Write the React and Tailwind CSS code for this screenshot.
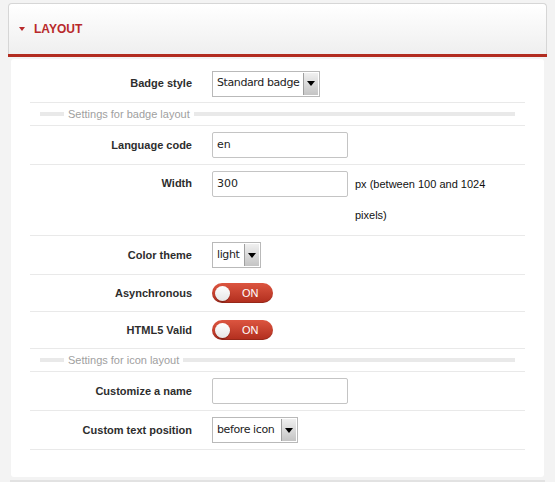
import React from "react";

const sans = { fontFamily: '"Liberation Sans", Arial, sans-serif' };

function Select({ value, width }) {
  return (
    <div
      className="flex h-[26px] items-stretch border border-[#b9b9b9] bg-white"
      style={{ width }}
    >
      <div className="flex flex-1 items-center overflow-hidden whitespace-nowrap pl-[4px] text-[11px] text-[#222] [font-family:'DejaVu_Sans',sans-serif] tracking-[-0.4px]">
        {value}
      </div>
      <div className="my-[1px] mr-[1px] flex w-[15px] items-center justify-center border-l border-[#a0a0a0] bg-gradient-to-b from-[#f0f0f0] to-[#c4c4c4]">
        <div className="h-0 w-0 border-l-[4px] border-r-[4px] border-t-[5px] border-l-transparent border-r-transparent border-t-black" />
      </div>
    </div>
  );
}

function Input({ value }) {
  return (
    <div className="flex h-[26px] w-[136px] items-center rounded-[2px] border border-[#c4c4c4] bg-white pl-[4px] text-[11px] text-[#222] [font-family:'DejaVu_Sans',sans-serif]">
      {value}
    </div>
  );
}

function Toggle() {
  return (
    <div className="flex h-[20px] w-[61px] items-center rounded-full bg-gradient-to-b from-[#dc5540] to-[#b12d1d] pl-[3px] shadow-[inset_0_-1px_0_rgba(0,0,0,0.15)]">
      <div className="h-[15px] w-[15px] rounded-full bg-gradient-to-b from-white to-[#e6e6e6] shadow-[0_1px_1px_rgba(0,0,0,0.3)]" />
      <span className="ml-[12px] text-[11px] text-white" style={sans}>
        ON
      </span>
    </div>
  );
}

function Row({ label, children, h = "h-[38px]" }) {
  return (
    <div className={`flex ${h} items-center border-b border-[#e9e9e9]`}>
      <div className="w-[162px] text-right text-[11px] font-bold text-[#2d2d2d]" style={sans}>
        {label}
      </div>
      <div className="ml-[20px] flex items-center">{children}</div>
    </div>
  );
}

function Section({ title }) {
  return (
    <div className="flex h-[23px] items-center border-b border-[#e9e9e9] pl-[10px] pr-[10px]">
      <div className="h-[4px] w-[24px] bg-[#e9e9e9]" />
      <span className="px-[4px] text-[11px] text-[#a0a0a0]" style={sans}>
        {title}
      </span>
      <div className="h-[4px] flex-1 bg-[#e9e9e9]" />
    </div>
  );
}

export default function App() {
  return (
    <div className="min-h-[482px] w-[555px] bg-[#f3f3f3] pt-[3px]" style={sans}>
      <div className="mx-[8px] flex h-[51px] items-center rounded-t-[4px] border border-b-0 border-[#d6d6d6] bg-gradient-to-b from-white to-[#efefef] pl-[10px] shadow-[0_3px_0_#b22c20]">
        <div className="h-0 w-0 border-l-[3px] border-r-[3px] border-t-[4px] border-l-transparent border-r-transparent border-t-[#b8292b]" />
        <span className="ml-[9px] text-[12px] font-bold text-[#b8292b]">LAYOUT</span>
      </div>
      <div className="mx-[11px] mt-[5px] h-[418px] rounded-[3px] bg-white px-[19px] pt-[6px]">
        <Row label="Badge style">
          <Select value="Standard badge" width={108} />
        </Row>
        <Section title="Settings for badge layout" />
        <Row label="Language code" h="h-[39px]">
          <Input value="en" />
        </Row>
        <div className="flex h-[71px] items-start border-b border-[#e9e9e9] pt-[6px]">
          <div className="w-[162px] text-right text-[11px] font-bold leading-[24px] text-[#2d2d2d]">
            Width
          </div>
          <div className="ml-[20px]">
            <Input value="300" />
          </div>
          <div className="ml-[7px] mt-[-2px] w-[150px] text-[11px] leading-[31px] text-[#111]">
            px (between 100 and 1024 pixels)
          </div>
        </div>
        <Row label="Color theme" h="h-[39px]">
          <Select value="light" width={49} />
        </Row>
        <Row label="Asynchronous" h="h-[37px]">
          <Toggle />
        </Row>
        <Row label="HTML5 Valid" h="h-[37px]">
          <Toggle />
        </Row>
        <Section title="Settings for icon layout" />
        <Row label="Customize a name" h="h-[39px]">
          <Input value="" />
        </Row>
        <Row label="Custom text position" h="h-[39px]">
          <Select value="before icon" width={86} />
        </Row>
      </div>
      <div className="mx-[10px] mt-[3px] h-[2px] bg-[#e2e2e2]" />
    </div>
  );
}
